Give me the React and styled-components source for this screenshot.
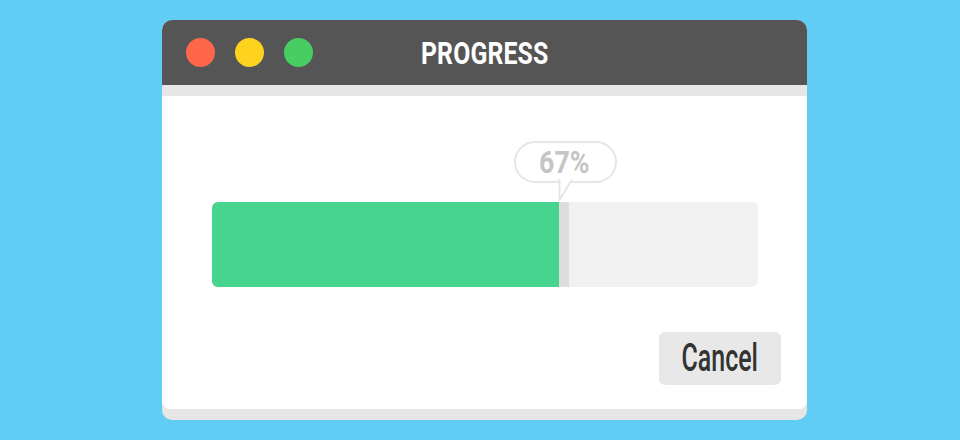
import React from "react";
import styled, { createGlobalStyle } from "styled-components";

const GlobalStyle = createGlobalStyle`
  html, body {
    margin: 0;
    padding: 0;
    background: #62cdf4;
  }
  body {
    width: 960px;
    height: 440px;
    overflow: hidden;
    font-family: Roboto, "Liberation Sans", sans-serif;
  }
`;

const progress = 63.5;

const App = () => {
  return (
    <>
      <GlobalStyle />
      <Page>
        <Window>
          <TitleBar>
            <Dots>
              <Dot color='#ff674a' />
              <Dot color='#fed320' />
              <Dot color='#47cd62' />
            </Dots>
            <Title>PROGRESS</Title>
          </TitleBar>
          <Body>
            <Track>
              <Fill style={{ width: `${progress}%` }} />
              <Bubble style={{ left: `calc(${progress}% - 45px)` }}>
                <BubbleText>67%</BubbleText>
                <Tail width='16' height='22' viewBox='0 0 16 22'>
                  <path d='M1 0 L1 21 L14 0 Z' fill='#fff' />
                  <path
                    d='M1.5 0 L1.5 21 L14 0.5'
                    fill='none'
                    stroke='#e6e6e6'
                    strokeWidth='2'
                    strokeLinejoin='round'
                  />
                </Tail>
              </Bubble>
            </Track>
            <Footer>
              <CancelButton>
                <ButtonLabel>Cancel</ButtonLabel>
              </CancelButton>
            </Footer>
          </Body>
        </Window>
      </Page>
    </>
  );
};

export default App;

const Page = styled.div`
  padding: 20px 0 0 162px;
`;

const Window = styled.div`
  width: 645px;
  height: 400px;
  background: #e6e6e6;
  border-radius: 10px;
  padding-bottom: 11px;
  box-sizing: border-box;
  display: flex;
  flex-direction: column;
  overflow: hidden;
`;

const TitleBar = styled.div`
  position: relative;
  height: 65px;
  flex: none;
  background: #555555;
  display: flex;
  align-items: center;
  justify-content: center;
`;

const Dots = styled.div`
  position: absolute;
  left: 24px;
  top: 18px;
  display: flex;
  gap: 20px;
`;

const Dot = styled.span`
  width: 29px;
  height: 29px;
  border-radius: 50%;
  background: ${(p) => p.color};
`;

const Title = styled.span`
  display: inline-block;
  color: #ffffff;
  font-weight: 700;
  font-size: 31px;
  letter-spacing: 0.2px;
  transform: scaleX(0.8);
  line-height: 1;
  margin-top: 1px;
`;

const Body = styled.div`
  flex: 1;
  margin-top: 11px;
  background: #ffffff;
  border-radius: 0 0 8px 8px;
  padding: 106px 49px 0 50px;
  display: flex;
  flex-direction: column;
`;

const Track = styled.div`
  position: relative;
  height: 85px;
  background: #f1f1f1;
  border-radius: 6px;
`;

const Fill = styled.div`
  height: 100%;
  background: #47d48f;
  border-radius: 6px 0 0 6px;
  border-right: 10px solid #dddddd;
`;

const Bubble = styled.div`
  position: absolute;
  bottom: calc(100% + 19px);
  width: 103px;
  height: 42px;
  box-sizing: border-box;
  border: 2px solid #e6e6e6;
  border-radius: 21px;
  background: #ffffff;
  display: flex;
  align-items: center;
  justify-content: center;
`;

const BubbleText = styled.span`
  display: inline-block;
  color: #c5c5c5;
  font-weight: 700;
  font-size: 31px;
  line-height: 1;
  margin-left: -2px;
  transform: scaleX(0.86);
`;

const Tail = styled.svg`
  position: absolute;
  left: 42px;
  top: 100%;
  margin-top: -2px;
`;

const Footer = styled.div`
  display: flex;
  justify-content: flex-end;
  margin-top: 45px;
  margin-right: -23px;
`;

const CancelButton = styled.button`
  width: 122px;
  height: 53px;
  border: none;
  border-radius: 6px;
  background: #e8e8e8;
  display: flex;
  align-items: center;
  justify-content: center;
  padding: 0;
  cursor: pointer;
  font-family: Roboto, "Liberation Sans", sans-serif;
`;

const ButtonLabel = styled.span`
  display: inline-block;
  color: #333333;
  font-size: 39px;
  font-weight: 500;
  line-height: 1;
  transform: scaleX(0.64);
`;
